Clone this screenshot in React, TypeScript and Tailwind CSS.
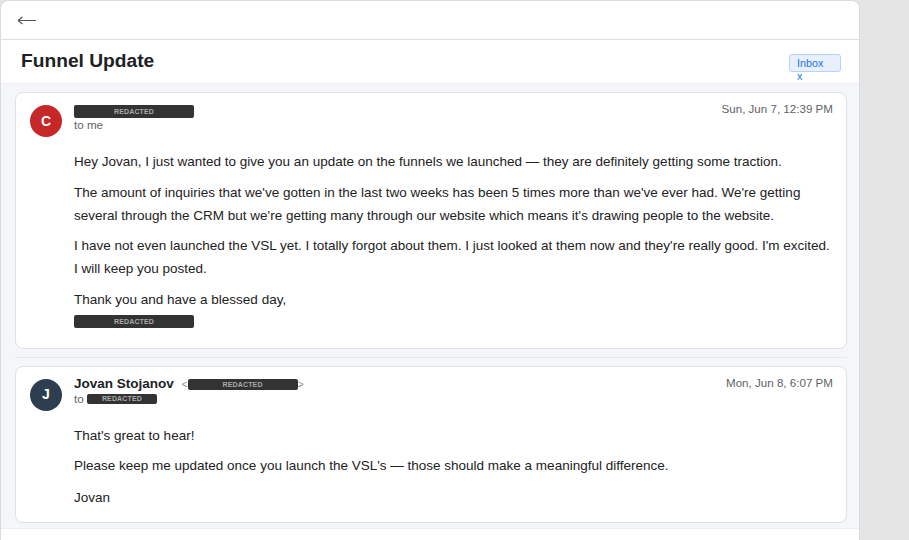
import React from 'react'

const Redacted = ({ w, h = 13 }: { w: number; h?: number }) => (
  <span
    className="inline-flex items-center justify-center rounded-[2px] bg-[#333333] align-middle text-[7px] font-bold leading-none tracking-[0.02em] text-[#a9a9a9]"
    style={{ width: w, height: h }}
  >
    REDACTED
  </span>
)

type Msg = {
  initial: string
  color: string
  date: string
  sender: React.ReactNode
  to: React.ReactNode
  body: React.ReactNode
}

const MessageCard = ({ msg }: { msg: Msg }) => (
  <div className="rounded-lg border border-[#dfe1e5] bg-white pl-[14px] pr-[13px] pt-3">
    <div className="flex items-start">
      <div
        className={`flex h-8 w-8 shrink-0 items-center justify-center rounded-full text-[14px] font-bold text-white ${msg.color}`}
      >
        {msg.initial}
      </div>
      <div className="ml-3 mt-[-2px] flex-1">
        <div className="flex h-[16px] items-center">{msg.sender}</div>
        <div className="flex h-[12px] items-center text-[11.6px] text-[#5f6368]">{msg.to}</div>
      </div>
      <div className="mt-[-5px] text-[11.6px] text-[#5f6368]">{msg.date}</div>
    </div>
    <div className="mt-[13px] pl-[44px] text-[13.5px] leading-[23px] text-[#222222]">{msg.body}</div>
  </div>
)

const messages: Msg[] = [
  {
    initial: 'C',
    color: 'bg-[#c62828]',
    date: 'Sun, Jun 7, 12:39 PM',
    sender: <Redacted w={120} />,
    to: <span>to me</span>,
    body: (
      <>
        <p className="mb-[7.5px]">
          Hey Jovan, I just wanted to give you an update on the funnels we launched — they are definitely getting
          some traction.
        </p>
        <p className="mb-[7.5px]">
          The amount of inquiries that we've gotten in the last two weeks has been 5 times more than we've ever had.
          We're getting several through the CRM but we're getting many through our website which means it's drawing
          people to the website.
        </p>
        <p className="mb-[7.5px]">
          I have not even launched the VSL yet. I totally forgot about them. I just looked at them now and they're
          really good. I'm excited. I will keep you posted.
        </p>
        <p>Thank you and have a blessed day,</p>
        <div className="mt-[3px] flex h-[16px] items-center">
          <Redacted w={120} />
        </div>
        <div className="h-[18px]" />
      </>
    ),
  },
  {
    initial: 'J',
    color: 'bg-[#2c3e50]',
    date: 'Mon, Jun 8, 6:07 PM',
    sender: (
      <span className="flex items-center">
        <span className="text-[13.5px] font-bold text-[#202124]">Jovan Stojanov</span>
        <span className="ml-2 flex items-center text-[10px] text-[#888888]">
          &lt;
          <Redacted w={110} h={11} />
          &gt;
        </span>
      </span>
    ),
    to: (
      <span className="flex items-center">
        to&nbsp;
        <Redacted w={70} h={10} />
      </span>
    ),
    body: (
      <>
        <p className="mb-[7px]">That's great to hear!</p>
        <p className="mb-[9px]">
          Please keep me updated once you launch the VSL's — those should make a meaningful difference.
        </p>
        <p>Jovan</p>
        <div className="h-[13px]" />
      </>
    ),
  },
]

export default function App() {
  return (
    <div className="flex h-[540px] overflow-hidden bg-[#e5e5e5] font-['Liberation_Sans',Arial,sans-serif]">
      <div className="flex w-[860px] flex-col rounded-t-lg border border-b-0 border-[#dadce0] bg-white">
        <div className="flex h-[39px] shrink-0 items-center border-b border-[#e0e0e0] pl-4">
          <svg width="20" height="10" viewBox="0 0 20 10" className="text-[#555555]">
            <path d="M1 5.5H19M1 5.5L5.5 2M1 5.5L5.5 9" fill="none" stroke="currentColor" strokeWidth="1.1" />
          </svg>
        </div>
        <div className="flex h-[44px] shrink-0 items-center justify-between border-b border-[#eceef1] pl-5 pr-[18px]">
          <h1 className="text-[19.2px] font-bold text-[#202124]">Funnel Update</h1>
          <div className="relative mt-[2px] h-[18px] w-[52px] rounded-[3px] border border-[#b9d3f7] bg-[#e8f0fe] pl-[7px] text-[10.8px] leading-[16px] text-[#1a73e8]">
            <div>Inbox</div>
            <div className="leading-[10px]">x</div>
          </div>
        </div>
        <div className="shrink-0 bg-[#f5f6fa] pb-[5px] pl-[14px] pr-[12px] pt-2">
          <MessageCard msg={messages[0]} />
          <div className="my-2 border-t border-[#e6e8ec]" />
          <MessageCard msg={messages[1]} />
        </div>
        <div className="flex-1 border-t border-[#eceef1] bg-white" />
      </div>
    </div>
  )
}
